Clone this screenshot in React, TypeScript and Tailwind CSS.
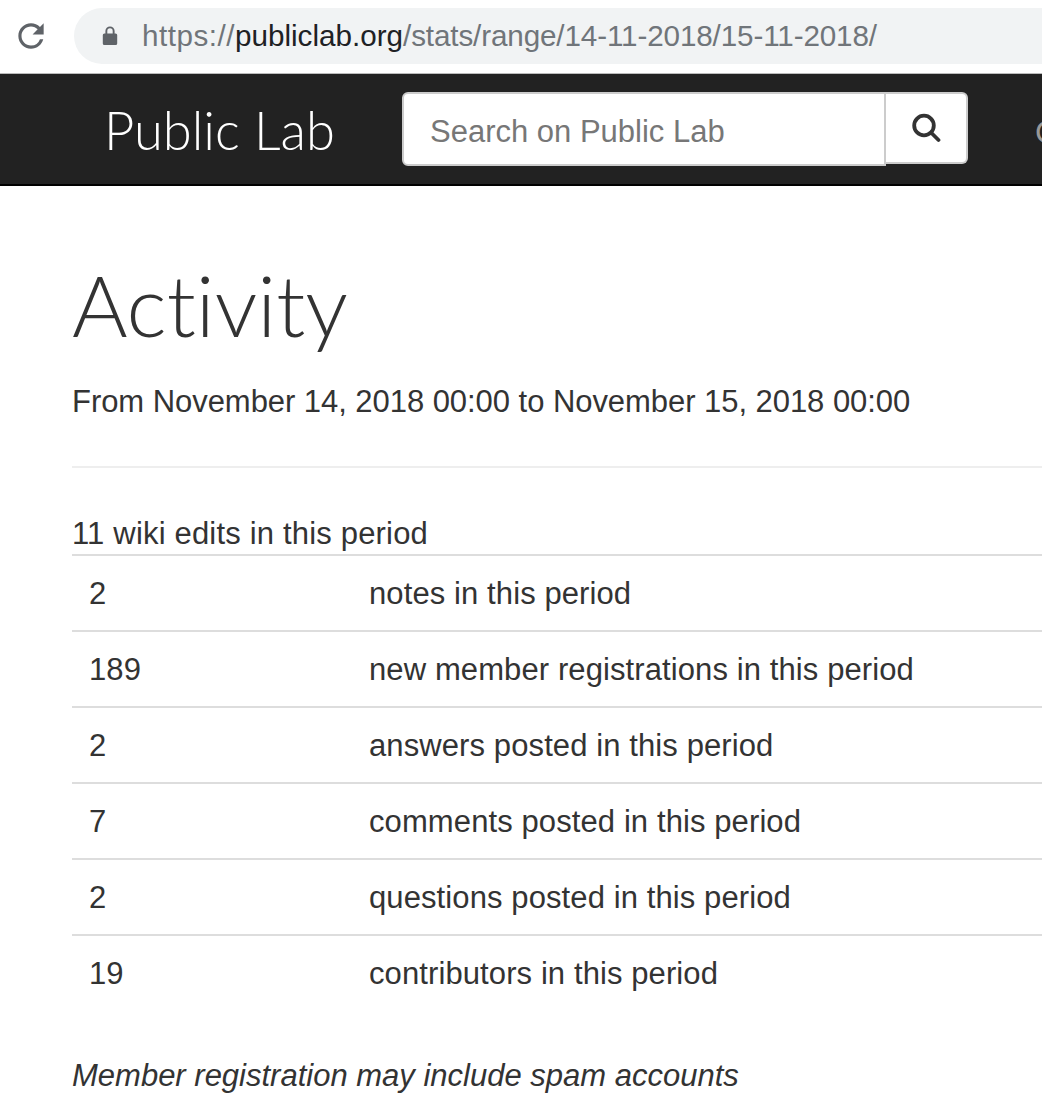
import React from 'react';

const rows = [
  { count: '2', label: 'notes in this period' },
  { count: '189', label: 'new member registrations in this period' },
  { count: '2', label: 'answers posted in this period' },
  { count: '7', label: 'comments posted in this period' },
  { count: '2', label: 'questions posted in this period' },
  { count: '19', label: 'contributors in this period' },
];

const ReloadIcon = () => (
  <svg width="38" height="38" viewBox="0 0 24 24" className="text-[#5f6368]" fill="currentColor">
    <path d="M17.65 6.35A7.958 7.958 0 0 0 12 4c-4.42 0-7.99 3.58-7.99 8s3.57 8 7.99 8c3.73 0 6.84-2.55 7.73-6h-2.08A5.99 5.99 0 0 1 12 18c-3.31 0-6-2.69-6-6s2.69-6 6-6c1.66 0 3.14.69 4.22 1.78L13 11h7V4l-2.35 2.35z" />
  </svg>
);

const LockIcon = () => (
  <svg width="16" height="20" viewBox="0 0 16 20" className="text-[#5f6368] shrink-0" fill="currentColor">
    <path d="M13.6 7.5h-1V5a4.6 4.6 0 0 0-9.2 0v2.5h-1A1.6 1.6 0 0 0 .8 9.1v8.3A1.6 1.6 0 0 0 2.4 19h11.2a1.6 1.6 0 0 0 1.6-1.6V9.1a1.6 1.6 0 0 0-1.6-1.6zM5.3 7.5V5a2.7 2.7 0 0 1 5.4 0v2.5H5.3z" />
  </svg>
);

const SearchIcon = () => (
  <svg width="30" height="30" viewBox="0 0 30 30" fill="none" stroke="#333" strokeWidth="3.8" strokeLinecap="round">
    <circle cx="13" cy="12.5" r="9.8" />
    <path d="M20.5 20l7 7" />
  </svg>
);

export default function App() {
  return (
    <div className="w-[1042px] h-[1114px] overflow-hidden bg-white font-['Liberation_Sans',sans-serif] text-[#333]">
      {/* Browser bar */}
      <div className="h-[74px] flex items-start pt-[8px] border-b border-[#bbb]">
        <div className="w-[74px] shrink-0 h-[56px] pl-[12px] flex items-center">
          <ReloadIcon />
        </div>
        <div className="flex-1 h-[56px] bg-[#f1f3f4] rounded-l-[28px] flex items-center pl-[28px] text-[29.65px] text-[#70757a] whitespace-nowrap">
          <LockIcon />
          <span className="ml-[24px]">
            <span className="tracking-[0.5px]">https://</span>
            <span className="text-[#202124]">publiclab.org</span>
            <span className="tracking-[-0.13px]">/stats/range/14-11-2018/15-11-2018/</span>
          </span>
        </div>
      </div>

      {/* Navbar */}
      <div className="h-[112px] bg-[#222] border-b-2 border-black flex items-start pt-[18px]">
        <div className="w-[402px] shrink-0 pl-[104px] pt-[7px] font-['Lato',sans-serif] font-light text-[52.5px] leading-[62px] text-white">
          Public Lab
        </div>
        <div className="w-[484px] shrink-0 h-[74px] bg-white border-2 border-[#ccc] rounded-l-[6px] flex items-center pl-[26px] pt-[6px] text-[31px] text-[#777]">
          Search on Public Lab
        </div>
        <div className="w-[82px] shrink-0 h-[72px] bg-white border-2 border-l-0 border-[#ccc] rounded-r-[6px] flex items-center justify-center">
          <SearchIcon />
        </div>
        <div className="ml-[67px] mt-[16px] text-[32px] text-[#999]">C</div>
      </div>

      {/* Content */}
      <div className="pl-[72px]">
        <h1 className="mt-[68px] font-['Lato',sans-serif] font-light text-[85px] leading-[100px] text-[#333] [font-variant-ligatures:none]">Activity</h1>
        <p className="mt-[27px] text-[31px] leading-[42px] tracking-[-0.05px]">From November 14, 2018 00:00 to November 15, 2018 00:00</p>
        <hr className="mt-[43px] border-t-2 border-[#eee]" />
        <p className="mt-[45px] text-[31px] leading-[41px] tracking-[0.18px]">11 wiki edits in this period</p>
        <div className="border-t-2 border-[#ddd] text-[31px] tracking-[0.1px]">
          {rows.map((row, i) => (
            <div key={i} className={`h-[76px] pt-[2px] flex items-center border-b-2 ${i < rows.length - 1 ? 'border-[#ddd]' : 'border-transparent'}`}>
              <div className="w-[297px] pl-[17px]">{row.count}</div>
              <div>{row.label}</div>
            </div>
          ))}
        </div>
        <p className="mt-[43px] text-[31px] leading-[42px] italic">Member registration may include spam accounts</p>
      </div>
    </div>
  );
}
